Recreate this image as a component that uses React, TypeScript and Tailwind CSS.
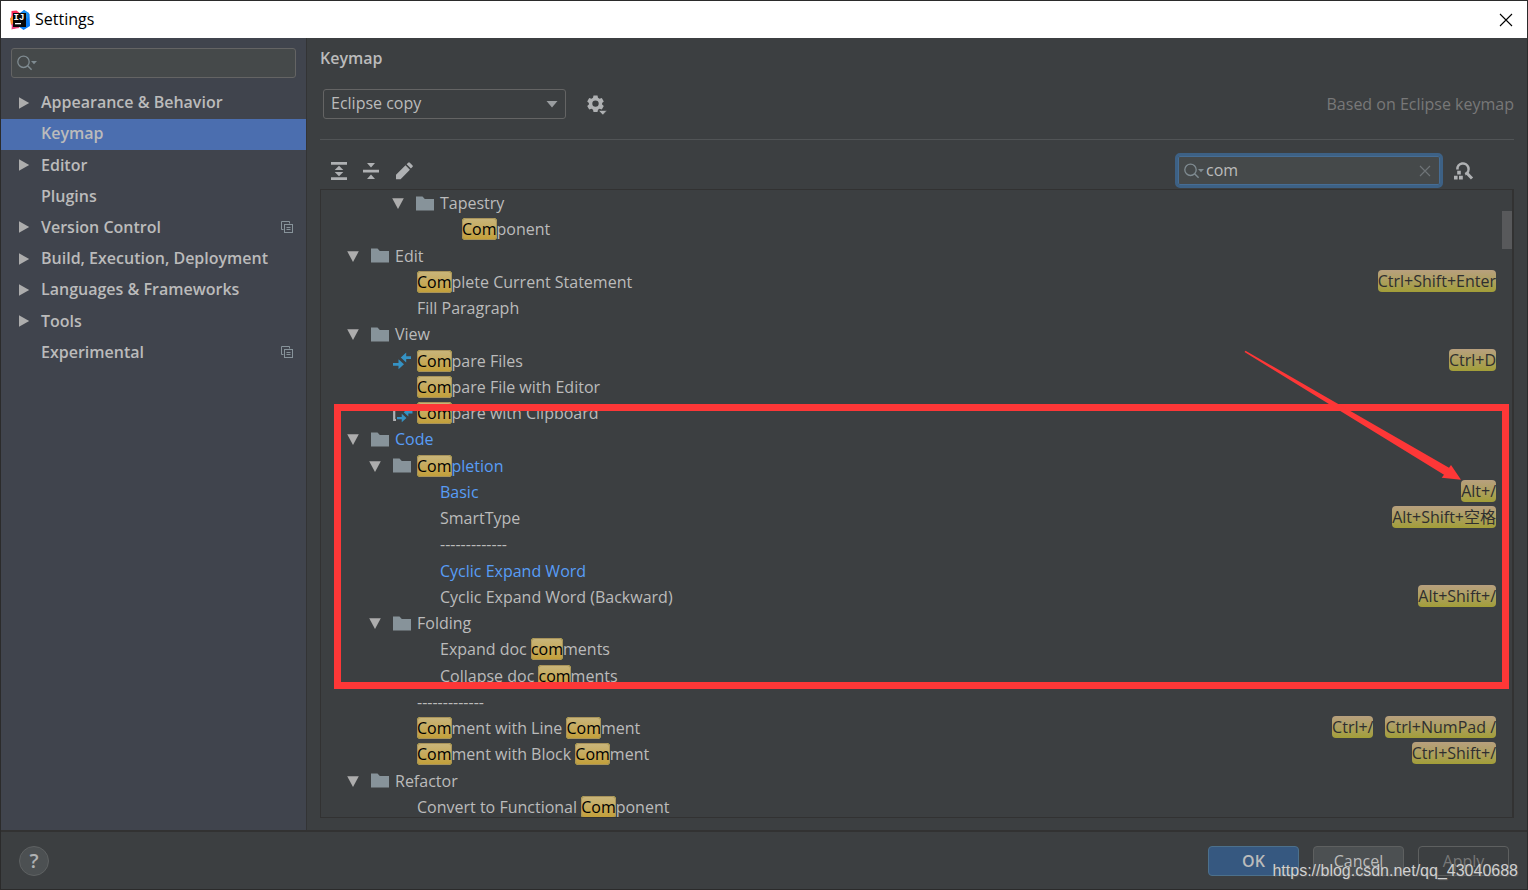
import { useState } from "react";
import type { ReactNode } from "react";

type Depth = 0 | 1 | 2 | 3;

type TreeRow = {
  depth: Depth;
  kind: "group" | "action";
  label: string;
  changed?: boolean;
  icon?: "compare" | "compareClipboard";
  shortcuts?: string[];
};

const SEPARATOR = "-------------";

const rows: TreeRow[] = [
  { depth: 2, kind: "group", label: "Tapestry" },
  { depth: 3, kind: "action", label: "Component" },
  { depth: 0, kind: "group", label: "Edit" },
  { depth: 1, kind: "action", label: "Complete Current Statement", shortcuts: ["Ctrl+Shift+Enter"] },
  { depth: 1, kind: "action", label: "Fill Paragraph" },
  { depth: 0, kind: "group", label: "View" },
  { depth: 1, kind: "action", label: "Compare Files", icon: "compare", shortcuts: ["Ctrl+D"] },
  { depth: 1, kind: "action", label: "Compare File with Editor" },
  { depth: 1, kind: "action", label: "Compare with Clipboard", icon: "compareClipboard" },
  { depth: 0, kind: "group", label: "Code", changed: true },
  { depth: 1, kind: "group", label: "Completion", changed: true },
  { depth: 2, kind: "action", label: "Basic", changed: true, shortcuts: ["Alt+/"] },
  { depth: 2, kind: "action", label: "SmartType", shortcuts: ["Alt+Shift+空格"] },
  { depth: 2, kind: "action", label: SEPARATOR },
  { depth: 2, kind: "action", label: "Cyclic Expand Word", changed: true },
  { depth: 2, kind: "action", label: "Cyclic Expand Word (Backward)", shortcuts: ["Alt+Shift+/"] },
  { depth: 1, kind: "group", label: "Folding" },
  { depth: 2, kind: "action", label: "Expand doc comments" },
  { depth: 2, kind: "action", label: "Collapse doc comments" },
  { depth: 1, kind: "action", label: SEPARATOR },
  { depth: 1, kind: "action", label: "Comment with Line Comment", shortcuts: ["Ctrl+/", "Ctrl+NumPad /"] },
  { depth: 1, kind: "action", label: "Comment with Block Comment", shortcuts: ["Ctrl+Shift+/"] },
  { depth: 0, kind: "group", label: "Refactor" },
  { depth: 1, kind: "action", label: "Convert to Functional Component" },
];

const indent: Record<Depth, string> = {
  0: "pl-[26px]",
  1: "pl-[48px]",
  2: "pl-[71px]",
  3: "pl-[93px]",
};

const categories = [
  { label: "Appearance & Behavior", expandable: true },
  { label: "Keymap" },
  { label: "Editor", expandable: true },
  { label: "Plugins" },
  { label: "Version Control", expandable: true, perProject: true },
  { label: "Build, Execution, Deployment", expandable: true },
  { label: "Languages & Frameworks", expandable: true },
  { label: "Tools", expandable: true },
  { label: "Experimental", perProject: true },
];

function AppLogo() {
  return (
    <svg width="20" height="20" viewBox="0 0 20 20" aria-hidden="true">
      <path d="M1.500 1l5-.5 5 4-4 13-6 2 1-6-2-4 1-4z" fill="#fe2d5b" />
      <path d="M0 8.500l4-4 3 6-6 4.500z" fill="#fc8a2c" />
      <path d="M1.500 14l4-1 4 5-7.500 1z" fill="#e8417f" />
      <path d="M10 3l4-3 5.500 4 .5 12-6.500 4-4-3z" fill="#0a7cf5" />
      <path d="M14 0l5 3-1 6-6-5z" fill="#1a91f0" />
      <rect x="3" y="3" width="13" height="14" fill="#080808" />
      <text x="3.500" y="10" fill="#fff" fontFamily="Liberation Mono, monospace" fontWeight="700" fontSize="9">
        IJ
      </text>
      <rect x="5" y="13" width="6" height="1.300" fill="#fff" />
    </svg>
  );
}

function SearchIcon() {
  return (
    <svg width="20" height="16" viewBox="0 0 20 16" fill="none" aria-hidden="true">
      <circle cx="6.5" cy="6.8" r="5.7" stroke="#7f8b91" strokeWidth="1.3" />
      <path d="M10.6 10.8L14.6 14.8" stroke="#7f8b91" strokeWidth="1.5" />
      <path d="M14 6h6l-3 3.2z" fill="#7f8b91" />
    </svg>
  );
}

function TriangleRight() {
  return (
    <svg width="12" height="12" viewBox="0 0 12 12" aria-hidden="true">
      <path d="M1 .3L11.200 6 1 11.700z" fill="#adadad" />
    </svg>
  );
}

function TriangleDown() {
  return (
    <svg width="12" height="12" viewBox="0 0 12 12" aria-hidden="true">
      <path d="M.2 1.300h11.600L6 12z" fill="#adadad" />
    </svg>
  );
}

function ProjectIcon() {
  return (
    <svg width="12" height="12" viewBox="0 0 12 12" fill="none" stroke="#87939a" aria-hidden="true">
      <path d="M2.500 8.500h-2v-8h8v2" />
      <rect x="3.500" y="3.500" width="8" height="8" />
      <path d="M5.500 6.500h4M5.500 8.500h4" />
    </svg>
  );
}

function FolderIcon() {
  return (
    <svg width="18" height="15" viewBox="0 0 18 15" aria-hidden="true">
      <path d="M0 .5h6.500l2.300 2.500H18v11.500H0z" fill="#87939a" />
    </svg>
  );
}

function CompareArrows() {
  return (
    <g fill="#3592c4">
      <path d="M0 11h5.500V7.300L11 12.300 5.500 17.200v-3.500H0z" />
      <path d="M18 4.200h-4.800V.5L7.800 5.500l5.400 5V7H18z" />
    </g>
  );
}

function CompareIcon() {
  return (
    <svg width="18" height="18" viewBox="0 0 18 18" aria-hidden="true">
      <CompareArrows />
    </svg>
  );
}

function CompareClipboardIcon() {
  return (
    <svg width="20" height="20" viewBox="0 0 20 20" aria-hidden="true">
      <path d="M3.500 3H1.200v14H3" fill="none" stroke="#afb1b3" strokeWidth="2.200" />
      <g transform="translate(4 4.500) scale(.86)">
        <CompareArrows />
      </g>
    </svg>
  );
}

function GearIcon() {
  return (
    <svg width="20" height="20" viewBox="0 0 20 20" aria-hidden="true">
      <g fill="#afb1b3">
        <path
          fillRule="evenodd"
          d="M6.500 .5h4l.5 2.300 1.500.9 2.300-.7 2 3.400-1.700 1.600v1.500l1.700 1.600-2 3.400-2.300-.7-1.500.9-.5 2.300h-4L6 14.700l-1.500-.9-2.300.7-2-3.400L1.900 9.500V8L.2 6.400l2-3.400 2.300.7L6 2.800zM8.500 5.400a3.200 3.200 0 1 0 0 6.400 3.200 3.200 0 0 0 0-6.400z"
        />
        <path d="M11.500 15.500h8.500l-4.200 4.500z" stroke="#3c3f41" strokeWidth=".6" />
      </g>
    </svg>
  );
}

function ExpandAllIcon() {
  return (
    <svg width="16" height="18" viewBox="0 0 16 18" fill="#afb1b3" aria-hidden="true">
      <path d="M0 0h16v2.700H0zM0 15.300h16V18H0zM8 3.700l4.300 4.300H3.700zM8 14.300l4.300-4.300H3.700z" />
    </svg>
  );
}

function CollapseAllIcon() {
  return (
    <svg width="16" height="18" viewBox="0 0 16 18" fill="#afb1b3" aria-hidden="true">
      <path d="M0 7.700h16v2.700H0zM4 1h8L8 5.500zM4 17h8l-4-4.500z" />
    </svg>
  );
}

function PencilIcon() {
  return (
    <svg width="18" height="18" viewBox="0 0 18 18" fill="#afb1b3" aria-hidden="true">
      <path d="M1 17.200v-4.500L10.500 3.300l4.400 4.400-9.300 9.500zM11.600 2.200l1.600-1.500q.8-.8 1.600 0l2.600 2.600q.8.900 0 1.600L15.900 6.600z" />
    </svg>
  );
}

function FindShortcutIcon() {
  return (
    <svg width="20" height="20" viewBox="0 0 20 20" aria-hidden="true">
      <path d="M3.400 8.500a5.600 5.600 0 1 1 7.800 4.700" fill="none" stroke="#afb1b3" strokeWidth="2.600" />
      <path d="M12.300 11.500L18 17.500" stroke="#afb1b3" strokeWidth="3" />
      <path d="M3.200 9.800h3.600v3.600H3.200zM0 14.800h3.600v3.600H0zM5 14.800h3.800v3.600H5z" fill="#afb1b3" />
    </svg>
  );
}

function highlight(label: string, query: string): ReactNode {
  if (!query) return label;
  const parts: ReactNode[] = [];
  const lower = label.toLowerCase();
  const needle = query.toLowerCase();
  let from = 0;
  let at = lower.indexOf(needle);
  while (at >= 0) {
    parts.push(label.slice(from, at));
    parts.push(
      <mark
        key={at}
        className="rounded-[4px] bg-linear-to-b from-[#c9b67c] to-[#c39f35] text-black inset-ring inset-ring-[#a8935a]"
      >
        {label.slice(at, at + needle.length)}
      </mark>,
    );
    from = at + needle.length;
    at = lower.indexOf(needle, from);
  }
  parts.push(label.slice(from));
  return parts;
}

function KeymapRow({ row, query }: { row: TreeRow; query: string }) {
  return (
    <li
      role="treeitem"
      aria-level={row.depth + 1}
      aria-expanded={row.kind === "group" ? true : undefined}
      className={`flex min-h-0 items-center pr-4 ${indent[row.depth]}`}
    >
      <span className="w-6 shrink-0">{row.kind === "group" && <TriangleDown />}</span>
      <span className="w-6 shrink-0">
        {row.kind === "group" && <FolderIcon />}
        {row.icon === "compare" && <CompareIcon />}
        {row.icon === "compareClipboard" && <CompareClipboardIcon />}
      </span>
      <span className={`grow whitespace-pre ${row.changed ? "text-[#589df6]" : "text-[#bbbbbb]"}`}>
        {highlight(row.label, query)}
      </span>
      <span className="flex gap-3 pb-[2px]">
        {row.shortcuts?.map((s) => (
          <kbd
            key={s}
            className="rounded-[4px] bg-linear-to-b from-[#b8a07e] to-[#a29e37] font-[Open_Sans,Noto_Sans_CJK_SC,sans-serif] leading-[22px] text-[#2f2f2f]"
          >
            {s}
          </kbd>
        ))}
      </span>
    </li>
  );
}

function Sidebar() {
  return (
    <nav aria-label="Settings categories" className="w-[306px] shrink-0 border-r border-[#333435] bg-[#40444d]">
      <label className="mx-[10px] mt-[10px] flex h-[30px] items-center rounded-[3px] border border-[#646464] bg-[#45494a] pl-[5px]">
        <SearchIcon />
        <input aria-label="Search settings" className="min-w-0 grow bg-transparent px-1 text-[#bbbbbb] outline-none" />
      </label>
      <ul className="mt-[10px] grid h-[281px] auto-rows-fr">
        {categories.map((c) => (
          <li key={c.label}>
            <a
              href="#"
              aria-current={c.label === "Keymap" ? "page" : undefined}
              className={`flex h-full items-center pr-[13px] pb-[2px] pl-[17px] font-semibold text-[#bbbbbb] ${
                c.label === "Keymap" ? "bg-[#4b6eaf]" : ""
              }`}
            >
              <span className="w-[23px] shrink-0">{c.expandable && <TriangleRight />}</span>
              <span className="grow pb-px whitespace-nowrap">{c.label}</span>
              {c.perProject && <ProjectIcon />}
            </a>
          </li>
        ))}
      </ul>
    </nav>
  );
}

function Annotations() {
  return (
    <div aria-hidden="true" className="pointer-events-none">
      <div className="absolute top-[215px] right-[5px] left-[14px] h-[285px] border-[7px] border-[#fd3737]" />
      <svg className="absolute top-[161px] right-[52px]" width="218" height="131" viewBox="0 0 218 131">
        <path d="M.5 2L1.500 .800 205 117.700 207 115 217 129.800 197.700 127.700 200 124.700z" fill="#fd3737" />
      </svg>
    </div>
  );
}

export default function App() {
  const [query, setQuery] = useState("com");

  return (
    <div className="relative flex h-screen flex-col border border-[#2b2b2b] bg-[#3c3f41] font-[Open_Sans,Noto_Sans_CJK_SC,sans-serif] text-base leading-5 text-[#bbbbbb]">
      <header className="flex h-[37px] shrink-0 items-center bg-white pr-[14px] pl-[9px] text-black">
        <AppLogo />
        <h1 className="ml-[5px] grow pb-[2px]">Settings</h1>
        <button type="button" aria-label="Close">
          <svg width="14" height="14" viewBox="0 0 14 14" stroke="#000" strokeWidth="1.100" aria-hidden="true">
            <path d="M1 1l12 12M13 1L1 13" />
          </svg>
        </button>
      </header>

      <div className="flex min-h-0 grow">
        <Sidebar />

        <main className="flex min-w-0 grow flex-col px-[13px] pt-[10px] pb-3">
          <h2 className="font-semibold">Keymap</h2>

          <div className="mt-[21px] flex items-center border-b border-[#515456] pb-5">
            <div className="relative ml-[3px] w-[243px]">
              <select
                aria-label="Keymap scheme"
                className="h-[30px] w-full appearance-none rounded-[3px] border border-[#646464] bg-[#3c3f41] pr-8 pb-[2px] pl-[7px] text-[#bbbbbb]"
              >
                <option>Eclipse copy</option>
              </select>
              <svg className="pointer-events-none absolute top-3 right-2" width="12" height="7" viewBox="0 0 12 7" aria-hidden="true">
                <path d="M.5 0h11L6 6.500z" fill="#9a9da0" />
              </svg>
            </div>
            <button type="button" aria-label="Keymap actions" className="ml-[21px] pt-[2px]">
              <GearIcon />
            </button>
            <span className="ml-auto text-[#787878]">Based on Eclipse keymap</span>
          </div>

          <div className="flex items-center pt-[13px] pb-px">
            <div className="flex items-center gap-4 pl-[11px]">
              <button type="button" aria-label="Expand all">
                <ExpandAllIcon />
              </button>
              <button type="button" aria-label="Collapse all">
                <CollapseAllIcon />
              </button>
              <button type="button" aria-label="Edit shortcut">
                <PencilIcon />
              </button>
            </div>
            <label className="ml-auto flex h-[35px] w-[268px] items-center rounded-[5px] border-[3px] border-[#3d6185] bg-[#45494a] pr-[9px] pl-[6px] inset-ring inset-ring-[#466d94]">
              <SearchIcon />
              <input
                aria-label="Find actions by name"
                value={query}
                onChange={(e) => setQuery(e.target.value)}
                className="min-w-0 grow bg-transparent pb-[2px] pl-[2px] text-[#bbbbbb] outline-none"
              />
              <button type="button" aria-label="Clear search" onClick={() => setQuery("")}>
                <svg width="12" height="12" viewBox="0 0 12 12" stroke="#6e7376" strokeWidth="1.200" aria-hidden="true">
                  <path d="M1 1l10 10M11 1L1 11" />
                </svg>
              </button>
            </label>
            <button type="button" aria-label="Find actions by shortcut" className="mr-10 ml-[11px]">
              <FindShortcutIcon />
            </button>
          </div>

          <div className="relative min-h-0 grow">
            <div className="h-full overflow-hidden border border-r-2 border-[#323232]">
              <ul role="tree" aria-label="Keymap actions" className="grid h-[630px] auto-rows-fr">
                {rows.map((row, i) => (
                  <KeymapRow key={i} row={row} query={query} />
                ))}
              </ul>
            </div>
            <div className="absolute top-[22px] right-[2px] h-[38px] w-[10px] bg-[#58595b]" />
            <Annotations />
          </div>
        </main>
      </div>

      <footer className="flex h-[59px] shrink-0 items-center border-t-2 border-[#323232] pr-[18px] pl-[18px]">
        <button
          type="button"
          aria-label="Help"
          className="size-[30px] rounded-full border border-[#5e6162] bg-[#4c5052] text-xl font-semibold text-[#afb1b3]"
        >
          ?
        </button>
        <div className="ml-auto flex gap-[14px]">
          <button type="button" className="h-[30px] w-[91px] rounded-[4px] border border-[#4c708c] bg-[#365880] font-semibold">
            OK
          </button>
          <button type="button" className="h-[30px] w-[91px] rounded-[4px] border border-[#5e6060] bg-[#4c5052]">
            Cancel
          </button>
          <button type="button" disabled className="h-[30px] w-[91px] rounded-[4px] border border-[#5e6060] text-[#777777]">
            Apply
          </button>
        </div>
      </footer>

      <p className="pointer-events-none absolute right-[9px] bottom-[6px] font-[Liberation_Sans,sans-serif] text-base text-[#d0d0d0] [text-shadow:1px_1px_1px_#555]">
        https://blog.csdn.net/qq_43040688
      </p>
    </div>
  );
}
